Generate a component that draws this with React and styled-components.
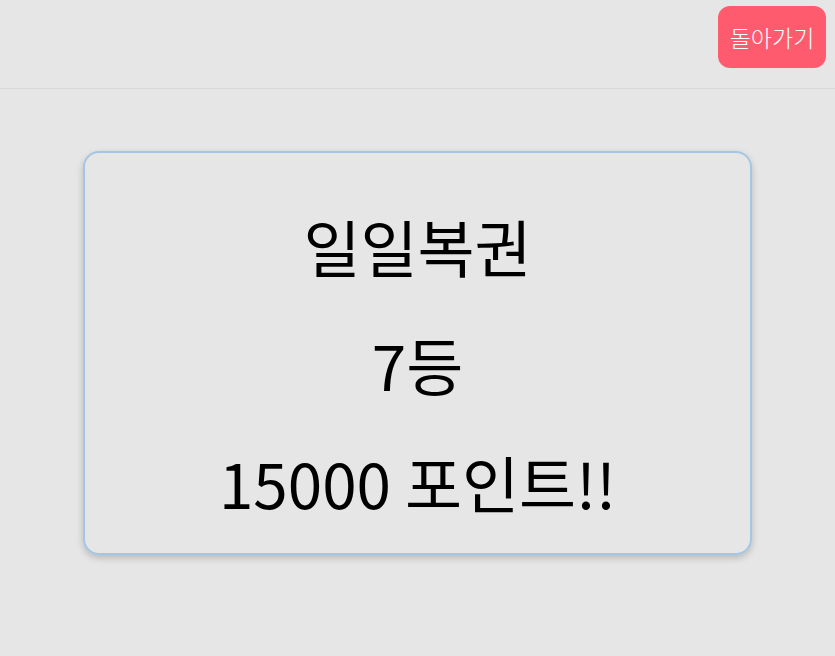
import React from 'react';
import styled, { createGlobalStyle } from 'styled-components';

const GlobalStyle = createGlobalStyle`
  body {
    margin: 0;
    background: #e6e6e6;
    font-family: "Noto Sans CJK KR", "Noto Sans", sans-serif;
  }
`;

const Page = styled.div`
  min-height: 656px;
  background: #e6e6e6;
`;

const Header = styled.header`
  height: 89px;
  display: flex;
  justify-content: flex-end;
  align-items: flex-start;
  padding: 6px 9px 0 0;
  box-sizing: border-box;
  border-bottom: 1px solid #d9d9d9;
`;

const BackButton = styled.button`
  width: 108px;
  height: 62px;
  padding: 0;
  border: none;
  border-radius: 12px;
  background: #ff5b6e;
  color: #fff;
  font-family: inherit;
  font-size: 23px;
  font-weight: 300;
  cursor: pointer;
`;

const Card = styled.section`
  margin: 62px 83px 0;
  height: 404px;
  box-sizing: border-box;
  border: 2px solid #a2c6e3;
  border-radius: 16px;
  box-shadow: 0 3px 7px rgba(0, 0, 0, 0.2);
  display: flex;
  flex-direction: column;
  align-items: center;
  justify-content: center;
  gap: 36px;
  padding-top: 22px;
`;

const Line = styled.div`
  font-size: 62px;
  line-height: 82px;
  color: #000;
`;

const App = () => {
  return (
    <Page>
      <GlobalStyle />
      <Header>
        <BackButton>돌아가기</BackButton>
      </Header>
      <Card>
        <Line>일일복권</Line>
        <Line>7등</Line>
        <Line>15000 포인트!!</Line>
      </Card>
    </Page>
  );
};

export default App;
